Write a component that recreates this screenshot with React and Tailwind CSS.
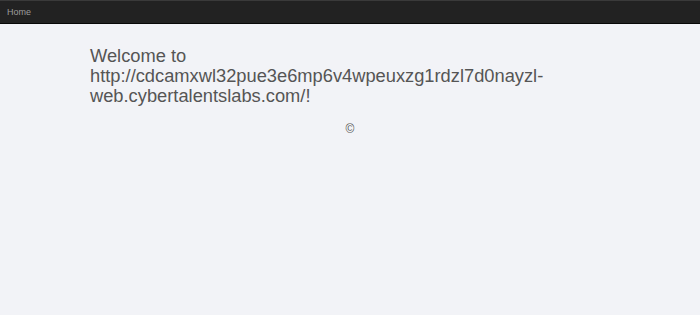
import React from "react";

const App = () => {
  return (
    <div className="min-h-[315px] bg-[#f2f3f7] font-['Liberation_Sans',Arial,sans-serif]">
      <nav className="h-6 bg-[#222] border-t border-[#3a3a3a] border-b border-b-[#080808] flex items-center px-[7px]">
        <a href="#" className="text-[9px] text-[#9d9d9d] pt-px">
          Home
        </a>
      </nav>
      <div className="w-[520px] mx-auto pt-[22px]">
        <h3 className="text-[18.3px] leading-[20px] text-[#555] break-words">
          Welcome to http://cdcamxwl32pue3e6mp6v4wpeuxzg1rdzl7d0nayzl-web.cybertalentslabs.com/!
        </h3>
        <p className="text-center text-[12px] text-[#555] mt-[14px]">©</p>
      </div>
    </div>
  );
};

export default App;
